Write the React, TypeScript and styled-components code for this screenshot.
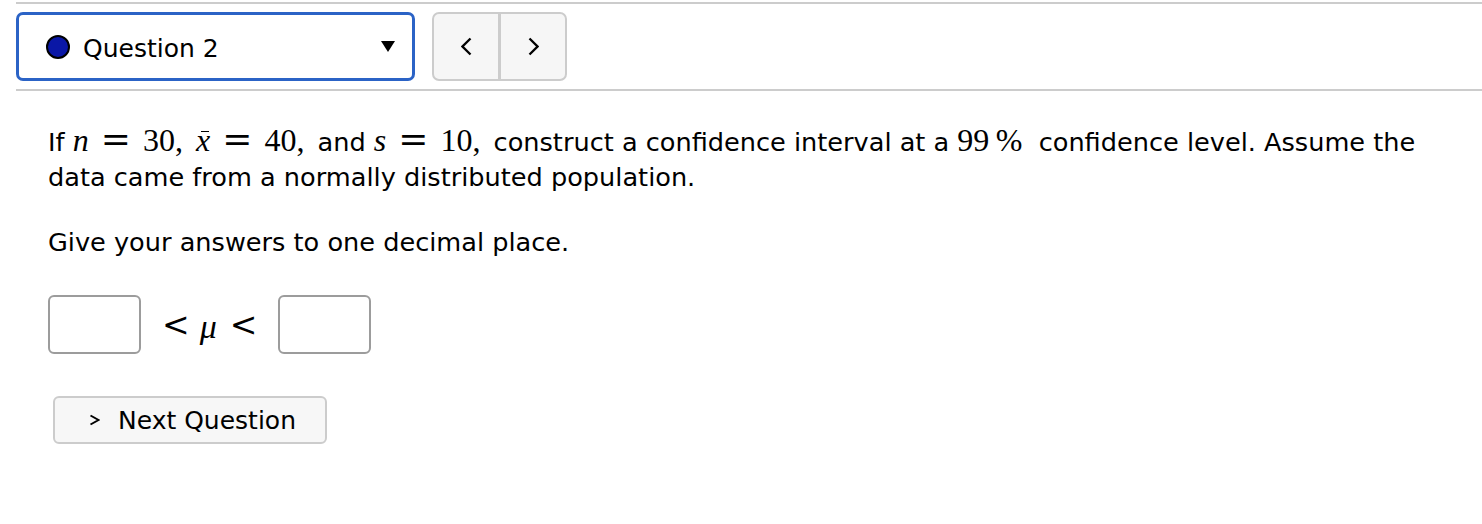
import React from 'react';
import styled, { createGlobalStyle } from 'styled-components';

const GlobalStyle = createGlobalStyle`
  body {
    margin: 0;
    background: #fff;
    color: #000;
    font-family: 'DejaVu Sans', 'Liberation Sans', sans-serif;
  }
`;

const Page = styled.div`
  padding-left: 16px;
`;

const Header = styled.div`
  display: flex;
  align-items: center;
  gap: 17px;
  margin-top: 2px;
  padding: 8px 0;
  border-top: 2px solid #cccccc;
  border-bottom: 2px solid #cccccc;
`;

const QuestionSelect = styled.div`
  box-sizing: border-box;
  width: 399px;
  height: 69px;
  display: flex;
  align-items: center;
  padding: 0 17px 0 27px;
  border: 3px solid #2b63c6;
  border-radius: 7px;
  background: #fff;
`;

const StatusDot = styled.span`
  box-sizing: border-box;
  width: 24px;
  height: 24px;
  border-radius: 50%;
  border: 2px solid #000;
  background: #0a17a6;
  flex-shrink: 0;
`;

const SelectLabel = styled.span`
  margin: 3px 0 0 13px;
  font-size: 25px;
`;

const Caret = styled.svg`
  margin-left: auto;
  display: block;
`;

const NavGroup = styled.div`
  box-sizing: border-box;
  width: 135px;
  height: 69px;
  display: flex;
  border: 2px solid #cccccc;
  border-radius: 7px;
  background: #f6f6f6;
  overflow: hidden;
`;

const NavButton = styled.button`
  all: unset;
  flex: 1;
  display: flex;
  align-items: center;
  justify-content: center;
  cursor: pointer;

  & + & {
    border-left: 3px solid #cccccc;
  }
`;

const Content = styled.div`
  padding: 33px 16px 0 32px;
  font-size: 25.6px;
  line-height: 35px;
`;

const Paragraph = styled.p<{ $gap?: number }>`
  margin: ${(p) => p.$gap ?? 0}px 0 0;
  max-width: 1412px;
`;

const MathNum = styled.span`
  font-family: 'Liberation Serif', serif;
  font-size: 32px;
  line-height: 0;
`;

const MathVar = styled(MathNum)`
  font-style: italic;
`;

const MathPunct = styled(MathNum)`
  margin-right: 5px;
`;

const MathRel = styled.span`
  font-family: 'DejaVu Serif', serif;
  font-size: 36px;
  line-height: 0;
  margin: 0 12px;
`;

const XBar = styled(MathVar)`
  position: relative;
  display: inline-block;
  line-height: 1;

  &::before {
    content: '';
    position: absolute;
    left: 5px;
    right: 1px;
    top: 7px;
    border-top: 1.8px solid #000;
  }
`;

const AnswerRow = styled.div`
  display: flex;
  align-items: center;
  margin-top: 35px;
`;

const AnswerBox = styled.input`
  box-sizing: border-box;
  width: 93px;
  height: 59px;
  border: 2px solid #9c9c9c;
  border-radius: 6px;
  background: #fff;
  outline: none;
`;

const Inequality = styled.span`
  display: flex;
  align-items: center;
  margin: 0 14px;
  line-height: 1;
`;

const IneqRel = styled.span`
  font-family: 'DejaVu Serif', serif;
  font-size: 33px;
  margin: 0 7px;
`;

const Mu = styled.span`
  font-family: 'Liberation Serif', serif;
  font-style: italic;
  font-size: 34px;
  margin: 4px 6px 0 3px;
`;

const NextButton = styled.button`
  all: unset;
  box-sizing: border-box;
  display: inline-flex;
  align-items: center;
  gap: 18px;
  height: 48px;
  margin: 42px 0 0 5px;
  padding: 0 29px 0 34px;
  border: 2px solid #cccccc;
  border-radius: 6px;
  background: #f7f7f7;
  font-size: 25px;
  cursor: pointer;
`;

const Chevron = ({ dir, w, h, stroke = 2.3 }: { dir: 'left' | 'right'; w: number; h: number; stroke?: number }) => {
  const pts =
    dir === 'left'
      ? `${w - 1.5},1.5 1.5,${h / 2} ${w - 1.5},${h - 1.5}`
      : `1.5,1.5 ${w - 1.5},${h / 2} 1.5,${h - 1.5}`;
  return (
    <svg width={w} height={h} viewBox={`0 0 ${w} ${h}`}>
      <polyline points={pts} fill="none" stroke="#000" strokeWidth={stroke} strokeLinejoin="miter" />
    </svg>
  );
};

export default function App() {
  return (
    <Page>
      <GlobalStyle />
      <Header>
        <QuestionSelect>
          <StatusDot />
          <SelectLabel>Question 2</SelectLabel>
          <Caret width="14" height="11" viewBox="0 0 14 11">
            <polygon points="0,0 14,0 7,11" fill="#000" />
          </Caret>
        </QuestionSelect>
        <NavGroup>
          <NavButton aria-label="Previous question">
            <Chevron dir="left" w={11} h={19} />
          </NavButton>
          <NavButton aria-label="Next question">
            <Chevron dir="right" w={11} h={19} />
          </NavButton>
        </NavGroup>
      </Header>

      <Content>
        <Paragraph>
          If <MathVar>n</MathVar>
          <MathRel>=</MathRel>
          <MathPunct>30,</MathPunct> <XBar>x</XBar>
          <MathRel>=</MathRel>
          <MathPunct>40,</MathPunct> and <MathVar>s</MathVar>
          <MathRel>=</MathRel>
          <MathPunct>10,</MathPunct> construct a confidence interval at a <MathNum>99&thinsp;%</MathNum>
          &nbsp; confidence level. Assume the data came from a normally distributed population.
        </Paragraph>
        <Paragraph $gap={30}>Give your answers to one decimal place.</Paragraph>

        <AnswerRow>
          <AnswerBox aria-label="Lower bound" />
          <Inequality>
            <IneqRel>&lt;</IneqRel>
            <Mu>μ</Mu>
            <IneqRel>&lt;</IneqRel>
          </Inequality>
          <AnswerBox aria-label="Upper bound" />
        </AnswerRow>

        <NextButton>
          <Chevron dir="right" w={11} h={12} stroke={2} />
          Next Question
        </NextButton>
      </Content>
    </Page>
  );
}
